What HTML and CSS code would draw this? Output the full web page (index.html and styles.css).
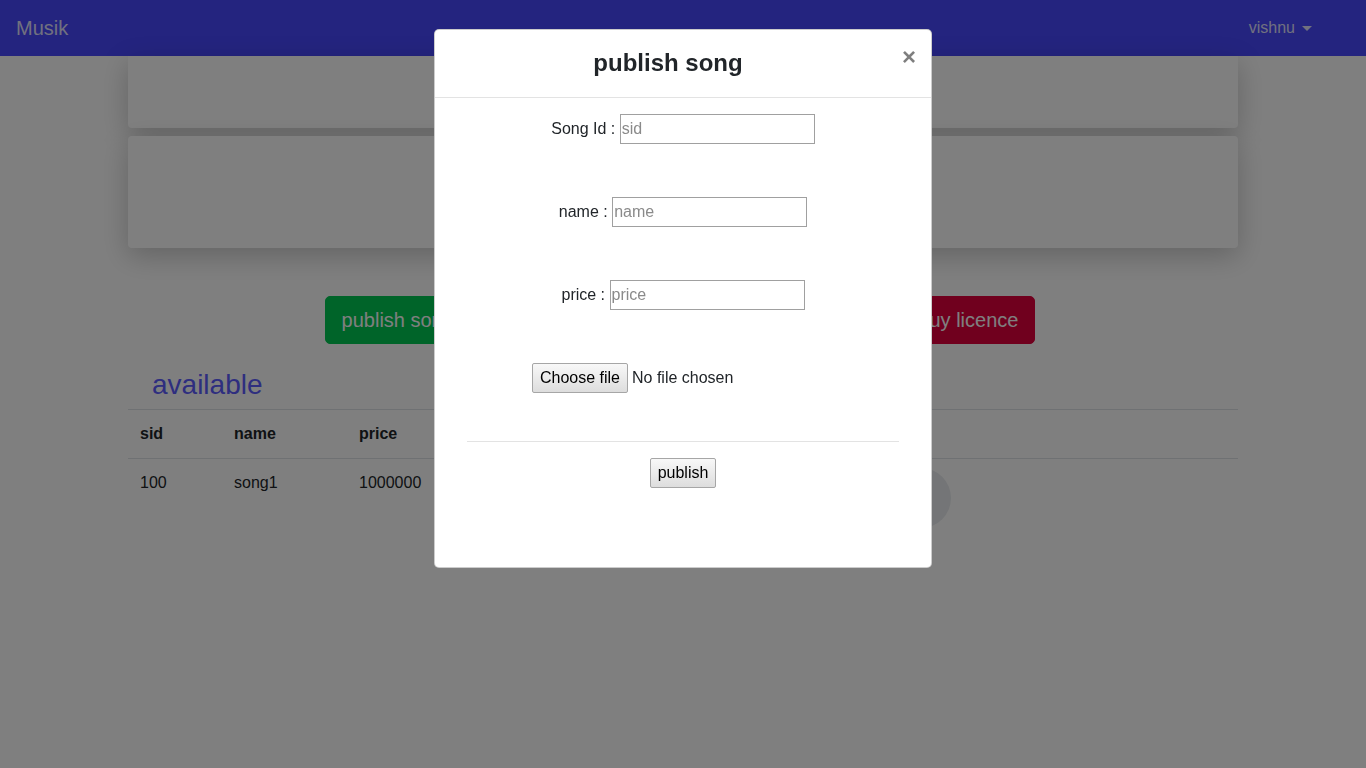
FILE: index.html
```html
<!DOCTYPE html>
<html lang="en">
<head>
<meta charset="utf-8">
<title>Musik</title>
<link rel="stylesheet" href="styles.css">
</head>
<body>
<nav class="navbar">
  <a class="brand" href="#">Musik</a>
  <div class="user">vishnu <span class="caret"></span></div>
</nav>

<main class="container">
  <div class="card card-top"></div>
  <div class="card card-second"></div>

  <div class="actions">
    <button class="btn btn-green">publish song</button>
    <button class="btn btn-blue">my licences</button>
    <button class="btn btn-red">buy licence</button>
  </div>

  <h3 class="section-title">available</h3>
  <table class="songs">
    <thead>
      <tr>
        <th class="c-sid">sid</th>
        <th class="c-name">name</th>
        <th class="c-price">price</th>
        <th class="c-owner">owner</th>
        <th class="c-act">play</th>
      </tr>
    </thead>
    <tbody>
      <tr>
        <td>100</td>
        <td>song1</td>
        <td>1000000</td>
        <td>vishnu</td>
        <td class="act-cell"><span class="play"><svg width="16" height="16" viewBox="0 0 16 16"><path d="M4 2 L13 8 L4 14 Z" fill="#333"/></svg></span></td>
      </tr>
    </tbody>
  </table>
</main>

<div class="backdrop">
  <div class="modal">
    <div class="modal-header">
      <h4 class="modal-title">publish song</h4>
      <button class="close" type="button">&times;</button>
    </div>
    <form class="modal-body">
      <div class="field">Song Id :&nbsp;<input type="text" placeholder="sid"></div>
      <div class="field">name :&nbsp;<input type="text" placeholder="name"></div>
      <div class="field">price :&nbsp;<input type="text" placeholder="price"></div>
      <div class="field file-field">
        <label class="file-label">
          <input type="file" class="file-input">
          <span class="plain-btn file-btn">Choose file</span>
          <span class="file-name">No file chosen</span>
        </label>
      </div>
      <hr class="sep">
      <div class="submit-row"><button type="button" class="plain-btn publish-btn">publish</button></div>
    </form>
  </div>
</div>
</body>
</html>
```

FILE: styles.css
```css
* { box-sizing: border-box; }

html, body {
  margin: 0;
  padding: 0;
  background: #fff;
  font-family: "Liberation Sans", Arial, sans-serif;
  font-size: 16px;
  color: #212529;
}

.navbar {
  height: 56px;
  background: #4848fe;
  display: flex;
  align-items: center;
  justify-content: space-between;
  padding: 0 46px 0 16px;
}

.brand {
  color: rgba(255, 255, 255, 0.85);
  font-size: 20px;
  text-decoration: none;
}

.user {
  color: rgba(255, 255, 255, 0.85);
  font-size: 16px;
  padding: 8px;
  display: flex;
  align-items: center;
}

.caret {
  display: inline-block;
  margin-left: 7px;
  width: 0;
  height: 0;
  border-top: 5px solid rgba(255, 255, 255, 0.85);
  border-left: 5px solid transparent;
  border-right: 5px solid transparent;
}

.container {
  width: 1110px;
  margin: 0 auto;
}

.card {
  background: #fff;
  border-radius: 4px;
  box-shadow: 0 8px 28px rgba(0, 0, 0, 0.22);
}

.card-top { height: 72px; border-top-left-radius: 0; border-top-right-radius: 0; }
.card-second { height: 112px; margin-top: 8px; }

.actions {
  margin-top: 48px;
  display: flex;
  justify-content: center;
  gap: 146px;
  padding-right: 6px;
}

.btn {
  font-family: "Liberation Sans", Arial, sans-serif;
  font-size: 20px;
  line-height: 30px;
  padding: 8px 16px;
  border: 1px solid transparent;
  border-radius: 5px;
  color: #fff;
}

.btn-green { background: #00c853; border-color: #00c853; }
.btn-blue { background: #4848fe; border-color: #4848fe; }
.btn-red { background: #e0003c; border-color: #e0003c; }

.section-title {
  margin: 24px 0 7px 24px;
  font-size: 28px;
  line-height: 34px;
  font-weight: 400;
  color: #5c5cff;
}

.songs {
  width: 100%;
  border-collapse: collapse;
}

.songs th, .songs td {
  padding: 12px;
  border-top: 1px solid #dee2e6;
  text-align: left;
  vertical-align: top;
  line-height: 24px;
}

.c-sid { width: 94px; }
.c-name { width: 125px; }
.c-price { width: 200px; }
.c-owner { width: 323px; }

.songs td.act-cell { padding-left: 21px; padding-top: 9px; }

.play {
  display: flex;
  align-items: center;
  justify-content: center;
  width: 60px;
  height: 60px;
  border-radius: 50%;
  background: #e8ebee;
}

/* modal */
.backdrop {
  position: fixed;
  inset: 0;
  background: rgba(0, 0, 0, 0.5);
  display: flex;
  justify-content: center;
  align-items: flex-start;
  padding-top: 29px;
}

.modal {
  width: 498px;
  height: 539px;
  background: #fff;
  border: 1px solid rgba(0, 0, 0, 0.2);
  border-radius: 5px;
  display: flex;
  flex-direction: column;
}

.modal-header {
  display: flex;
  align-items: flex-start;
  padding: 15px 16px 16px 15px;
  border-bottom: 1px solid #e3e3e3;
}

.modal-title {
  flex: 1;
  margin: 0;
  text-align: center;
  font-size: 24px;
  line-height: 36px;
  font-weight: 700;
  color: #212529;
}

.close {
  margin: -16px -17px -16px auto;
  padding: 10px 16px 16px;
  background: transparent;
  border: 0;
  font-family: "Liberation Sans", Arial, sans-serif;
  font-size: 24px;
  font-weight: 700;
  line-height: 36px;
  color: #000;
  opacity: 0.5;
}

.modal-body {
  padding: 16px 32px 0;
  display: flex;
  flex-direction: column;
  gap: 53px;
}

.field {
  display: flex;
  align-items: center;
  justify-content: center;
  height: 30px;
  font-size: 16px;
  color: #212529;
}

.field input[type="text"] {
  width: 195px;
  height: 30px;
  border: 1px solid #a0a0a0;
  padding: 1px 1px;
  font-family: "Liberation Sans", Arial, sans-serif;
  font-size: 16px;
  color: #212529;
}

.field input::placeholder { color: #8a8a8a; }

.file-field {
  justify-content: flex-start;
  padding-left: 65px;
}

.file-label {
  display: flex;
  align-items: center;
}

.file-input {
  display: none;
}

.file-name {
  margin-left: 4px;
  font-size: 16px;
  color: #212529;
  white-space: nowrap;
}

.plain-btn {
  font-family: "Liberation Sans", Arial, sans-serif;
  font-size: 16px;
  height: 30px;
  color: #000;
  background: linear-gradient(#f8f8f8, #dddddd);
  border: 1px solid #a6a6a6;
  border-radius: 2px;
  display: inline-flex;
  align-items: center;
  justify-content: center;
  white-space: nowrap;
}

.file-btn { width: 96px; padding: 0; }

.sep {
  margin: -5px 0 -37px;
  border: 0;
  border-top: 1px solid #e3e3e3;
}

.submit-row {
  display: flex;
  justify-content: center;
}

.publish-btn {
  padding: 0;
  width: 66px;
}
```
